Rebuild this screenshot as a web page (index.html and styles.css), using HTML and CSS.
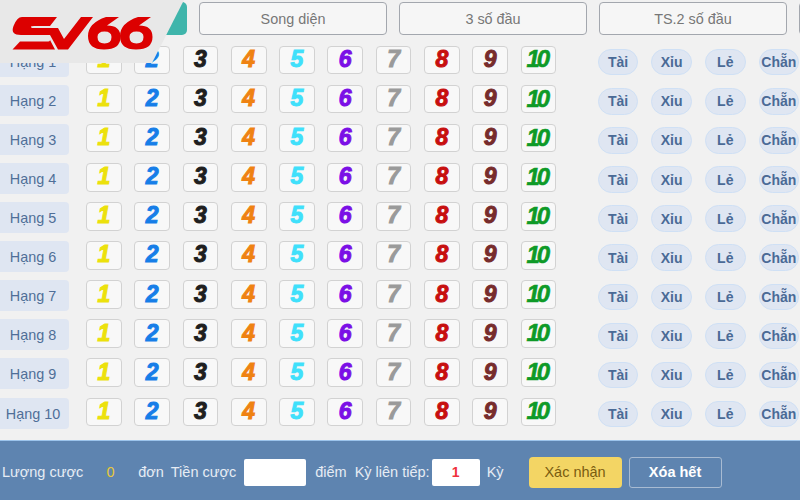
FILE: index.html
```html
<!DOCTYPE html>
<html lang="vi">
<head>
<meta charset="utf-8">
<title>SV66</title>
<link rel="stylesheet" href="styles.css">
</head>
<body>
<div class="page">
  <div class="logo">
    <svg width="190" height="63" viewBox="0 0 190 63" role="img" aria-label="SV66">
      <polygon class="logo-bg" points="0,0 184,0 152,63 0,63"/>
      <path class="logo-red" d="M22 17H57L50 26H34Q29 26 32 28H58L64 39L81 17H93L68 49.500H58L50 35H21Q10 35 13.500 26Q17 17 22 17Z"/>
      <path class="logo-red" d="M12.500 49.500L20 41.500H47Q50 41.500 50 40L55 49.500Z"/>
      <path class="logo-red" fill-rule="evenodd" d="M119 17H106Q88 23 88 36Q88 49.500 104 49.500Q120.500 49.500 120.500 37Q120.500 25.500 107 25.500ZM104.500 31.500Q111.500 31.500 111.500 37Q111.500 43.500 104.500 43.500Q97.500 43.500 97.500 37Q97.500 31.500 104.500 31.500Z"/>
      <path class="logo-red" fill-rule="evenodd" d="M151 17H138Q120 23 120 36Q120 49.500 136 49.500Q152.500 49.500 152.500 37Q152.500 25.500 139 25.500ZM136.500 31.500Q143.500 31.500 143.500 37Q143.500 43.500 136.500 43.500Q129.500 43.500 129.500 37Q129.500 31.500 136.500 31.500Z"/>
    </svg>
  </div>
  <div class="tabs">
    <div class="teal"></div>
    <button class="tab">Song diện</button>
    <button class="tab">3 số đầu</button>
    <button class="tab">TS.2 số đầu</button>
    <button class="tab"></button>
  </div>
  <div class="rows">
    <div class="row"><div class="label">Hạng 1</div><div class="nums"><span class="num n1">1</span><span class="num n2">2</span><span class="num n3">3</span><span class="num n4">4</span><span class="num n5">5</span><span class="num n6">6</span><span class="num n7">7</span><span class="num n8">8</span><span class="num n9">9</span><span class="num n10">10</span></div><div class="pills"><span class="pill">Tài</span><span class="pill">Xỉu</span><span class="pill">Lẻ</span><span class="pill">Chẵn</span></div></div>
    <div class="row"><div class="label">Hạng 2</div><div class="nums"><span class="num n1">1</span><span class="num n2">2</span><span class="num n3">3</span><span class="num n4">4</span><span class="num n5">5</span><span class="num n6">6</span><span class="num n7">7</span><span class="num n8">8</span><span class="num n9">9</span><span class="num n10">10</span></div><div class="pills"><span class="pill">Tài</span><span class="pill">Xỉu</span><span class="pill">Lẻ</span><span class="pill">Chẵn</span></div></div>
    <div class="row"><div class="label">Hạng 3</div><div class="nums"><span class="num n1">1</span><span class="num n2">2</span><span class="num n3">3</span><span class="num n4">4</span><span class="num n5">5</span><span class="num n6">6</span><span class="num n7">7</span><span class="num n8">8</span><span class="num n9">9</span><span class="num n10">10</span></div><div class="pills"><span class="pill">Tài</span><span class="pill">Xỉu</span><span class="pill">Lẻ</span><span class="pill">Chẵn</span></div></div>
    <div class="row"><div class="label">Hạng 4</div><div class="nums"><span class="num n1">1</span><span class="num n2">2</span><span class="num n3">3</span><span class="num n4">4</span><span class="num n5">5</span><span class="num n6">6</span><span class="num n7">7</span><span class="num n8">8</span><span class="num n9">9</span><span class="num n10">10</span></div><div class="pills"><span class="pill">Tài</span><span class="pill">Xỉu</span><span class="pill">Lẻ</span><span class="pill">Chẵn</span></div></div>
    <div class="row"><div class="label">Hạng 5</div><div class="nums"><span class="num n1">1</span><span class="num n2">2</span><span class="num n3">3</span><span class="num n4">4</span><span class="num n5">5</span><span class="num n6">6</span><span class="num n7">7</span><span class="num n8">8</span><span class="num n9">9</span><span class="num n10">10</span></div><div class="pills"><span class="pill">Tài</span><span class="pill">Xỉu</span><span class="pill">Lẻ</span><span class="pill">Chẵn</span></div></div>
    <div class="row"><div class="label">Hạng 6</div><div class="nums"><span class="num n1">1</span><span class="num n2">2</span><span class="num n3">3</span><span class="num n4">4</span><span class="num n5">5</span><span class="num n6">6</span><span class="num n7">7</span><span class="num n8">8</span><span class="num n9">9</span><span class="num n10">10</span></div><div class="pills"><span class="pill">Tài</span><span class="pill">Xỉu</span><span class="pill">Lẻ</span><span class="pill">Chẵn</span></div></div>
    <div class="row"><div class="label">Hạng 7</div><div class="nums"><span class="num n1">1</span><span class="num n2">2</span><span class="num n3">3</span><span class="num n4">4</span><span class="num n5">5</span><span class="num n6">6</span><span class="num n7">7</span><span class="num n8">8</span><span class="num n9">9</span><span class="num n10">10</span></div><div class="pills"><span class="pill">Tài</span><span class="pill">Xỉu</span><span class="pill">Lẻ</span><span class="pill">Chẵn</span></div></div>
    <div class="row"><div class="label">Hạng 8</div><div class="nums"><span class="num n1">1</span><span class="num n2">2</span><span class="num n3">3</span><span class="num n4">4</span><span class="num n5">5</span><span class="num n6">6</span><span class="num n7">7</span><span class="num n8">8</span><span class="num n9">9</span><span class="num n10">10</span></div><div class="pills"><span class="pill">Tài</span><span class="pill">Xỉu</span><span class="pill">Lẻ</span><span class="pill">Chẵn</span></div></div>
    <div class="row"><div class="label">Hạng 9</div><div class="nums"><span class="num n1">1</span><span class="num n2">2</span><span class="num n3">3</span><span class="num n4">4</span><span class="num n5">5</span><span class="num n6">6</span><span class="num n7">7</span><span class="num n8">8</span><span class="num n9">9</span><span class="num n10">10</span></div><div class="pills"><span class="pill">Tài</span><span class="pill">Xỉu</span><span class="pill">Lẻ</span><span class="pill">Chẵn</span></div></div>
    <div class="row"><div class="label">Hạng 10</div><div class="nums"><span class="num n1">1</span><span class="num n2">2</span><span class="num n3">3</span><span class="num n4">4</span><span class="num n5">5</span><span class="num n6">6</span><span class="num n7">7</span><span class="num n8">8</span><span class="num n9">9</span><span class="num n10">10</span></div><div class="pills"><span class="pill">Tài</span><span class="pill">Xỉu</span><span class="pill">Lẻ</span><span class="pill">Chẵn</span></div></div>
  </div>
  <div class="footer">
    <span class="f-first">Lượng cược</span>
    <span class="count">0</span>
    <span class="f-unit">đơn</span>
    <span class="f-money">Tiền cược</span>
    <div class="field money"></div>
    <span class="f-point">điểm</span>
    <span class="f-term">Kỳ liên tiếp:</span>
    <div class="field term">1</div>
    <span class="f-ky">Kỳ</span>
    <button class="confirm">Xác nhận</button>
    <button class="clear">Xóa hết</button>
  </div>
</div>
</body>
</html>
```

FILE: styles.css
```css
* { box-sizing: border-box; }
html, body { margin: 0; padding: 0; }
body { font-family: "Liberation Sans", Arial, sans-serif; background: #f1f1f1; }
.page {
  width: 800px; height: 500px; overflow: hidden; position: relative;
  display: flex; flex-direction: column; background: #f1f1f1;
}
.logo { position: absolute; left: 0; top: 0; z-index: 5; height: 63px; line-height: 0; }
.logo-bg { fill: #e8e8e8; }
.logo-red { fill: #dc0000; }
.tabs {
  height: 45.6px; flex: none; display: flex; gap: 12px; padding: 2px 0 0 199px;
  position: relative; align-items: flex-start;
}
.teal {
  position: absolute; left: 150px; top: 2px; width: 37px; height: 33px;
  background: #3fb5ab; border-radius: 0 5px 5px 0;
}
.tab {
  flex: none; width: 188px; height: 33px; border: 1px solid #a3a7ae; border-radius: 4px;
  background: #f6f6f6; color: #777; font: 14.4px "Liberation Sans", Arial, sans-serif; padding: 0;
}
.rows { flex: none; height: 391.1px; display: grid; grid-template-rows: repeat(10, 1fr); }
.row { display: flex; align-items: flex-start; min-height: 0; }
.label {
  width: 69px; height: 31px; flex: none; background: #dfe6f2; border-radius: 0 4px 4px 0;
  display: flex; align-items: center; justify-content: center; padding: 1px 3px 0 0;
  color: #4f6f98; font-size: 14.4px;
}
.nums { display: grid; grid-template-columns: repeat(10, 35.7px); column-gap: 12.6px; margin-left: 17px; flex: none; }
.num {
  height: 28.6px; border: 1px solid #d2d2d2; border-radius: 4px; background: #f8f8f8;
  display: flex; align-items: center; justify-content: center;
  font-size: 23px; font-weight: bold; font-style: italic; line-height: 1;
  -webkit-text-stroke: 1px currentColor; padding-bottom: 1px;
}
.n1 { color: #ece10c; }
.n2 { color: #167ee8; }
.n3 { color: #1f1f1f; }
.n4 { color: #ef8212; }
.n5 { color: #3fe0fb; }
.n6 { color: #7b0fe6; }
.n7 { color: #9a9a9a; }
.n8 { color: #c70f0f; }
.n9 { color: #772c2c; }
.n10 { color: #0e9a27; letter-spacing: -3px; font-size: 24px; -webkit-text-stroke-width: 0.6px; padding-right: 3px; }
.pills { display: grid; grid-template-columns: repeat(4, 40.5px); column-gap: 13.1px; margin-left: 41.6px; margin-top: 3.3px; flex: none; }
.pill {
  height: 26.6px; border: 1px solid #cfe0f5; border-radius: 14px; background: #dfe6f2;
  display: flex; align-items: center; justify-content: center;
  color: #4a6a96; font-size: 14px; font-weight: bold; white-space: nowrap;
}
.footer {
  flex: 1; margin-top: 3.3px; background: #5e84b0; border-top: 1px solid #9cc4ec;
  display: flex; align-items: center; color: #e6ecf4; font-size: 14.5px; padding: 6px 0 2px 2px;
}
.footer span { white-space: nowrap; }
.count { width: 55px; text-align: center; color: #e8c93a; }
.f-money { margin-left: 7px; }
.field { height: 27px; background: #fff; border-radius: 2px; flex: none; }
.money { width: 62px; margin-left: 8px; }
.f-point { margin-left: 9px; }
.f-term { margin-left: 8px; }
.term {
  width: 48px; margin-left: 2px; color: #f0313c; font-size: 14px; font-weight: bold;
  display: flex; align-items: center; justify-content: center;
}
.f-ky { margin-left: 7px; }
.confirm {
  margin-left: 25px; width: 93px; height: 31px; border: 0; border-radius: 4px;
  background: #f3d564; color: #7a5c10; font: 14.5px "Liberation Sans", Arial, sans-serif; padding: 0;
}
.clear {
  margin-left: 7px; width: 93px; height: 31px; border: 1px solid #a8bbd2; border-radius: 3px;
  background: transparent; color: #fff; font: bold 14.5px "Liberation Sans", Arial, sans-serif; padding: 0;
}
```
